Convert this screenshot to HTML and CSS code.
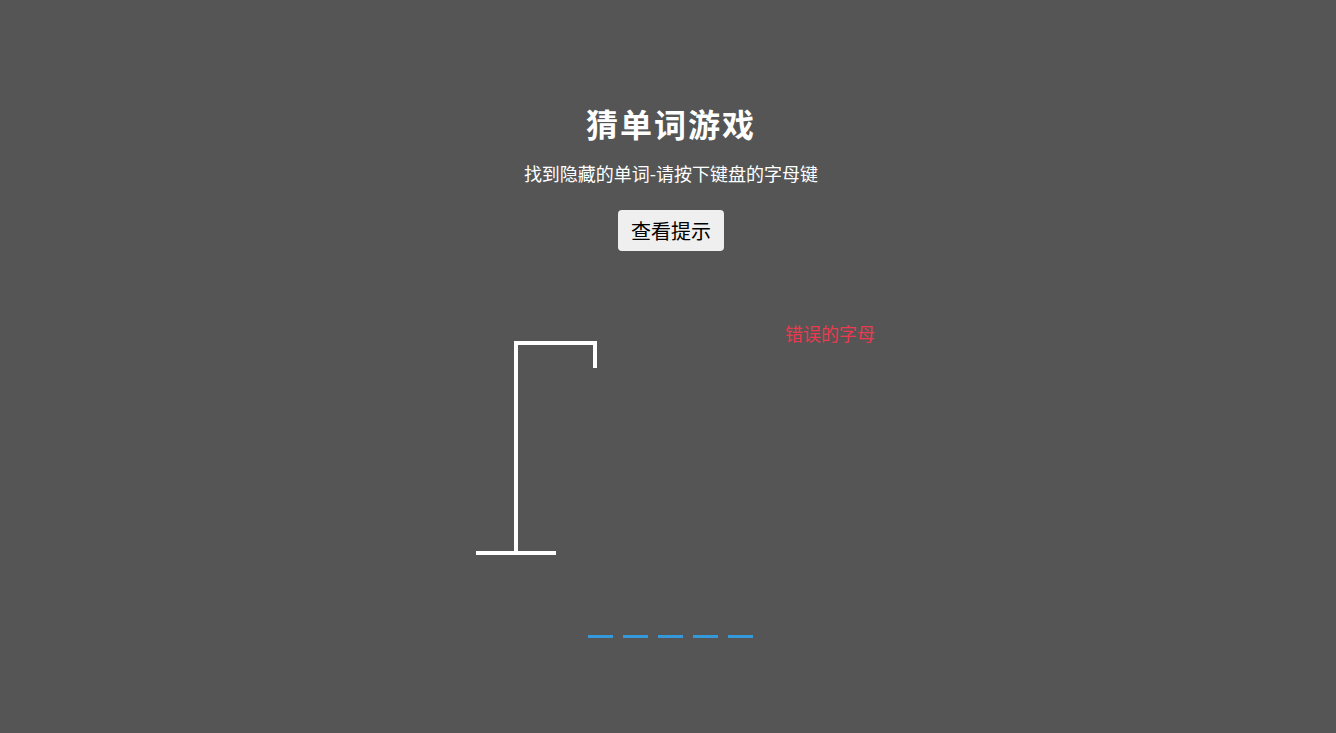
FILE: index.html
```html
<!DOCTYPE html>
<html lang="zh-CN">
<head>
<meta charset="UTF-8">
<title>猜单词游戏</title>
<link rel="stylesheet" href="styles.css">
</head>
<body>
  <h1 class="title">猜单词游戏</h1>
  <p class="subtitle">找到隐藏的单词-请按下键盘的字母键</p>
  <button class="hint-btn">查看提示</button>

  <div class="game-container">
    <svg class="figure" width="200" height="250" viewBox="0 0 200 250">
      <path d="M20 230 H100" />
      <path d="M60 230 V20 H139 V45" />
    </svg>
    <div class="wrong-letters">
      <p class="wrong-title">错误的字母</p>
    </div>
  </div>

  <div class="word">
    <span class="letter"></span>
    <span class="letter"></span>
    <span class="letter"></span>
    <span class="letter"></span>
    <span class="letter"></span>
  </div>
</body>
</html>
```

FILE: styles.css
```css
html, body {
  margin: 0;
  height: 100%;
}

body {
  background-color: #555555;
  color: #ffffff;
  font-family: "Noto Sans CJK SC", "Noto Sans", sans-serif;
  display: flex;
  flex-direction: column;
  align-items: center;
  padding-left: 6px;
  box-sizing: border-box;
  overflow: hidden;
}

.title {
  margin: 100px 0 0;
  font-size: 32px;
  line-height: 46px;
  font-weight: 700;
  letter-spacing: 2px;
}

.subtitle {
  margin: 15px 0 0;
  font-size: 18px;
  line-height: 24px;
  letter-spacing: 0;
}

.hint-btn {
  margin-top: 25px;
  font-family: "Noto Sans CJK SC", "Noto Sans", sans-serif;
  font-size: 20px;
  line-height: 29px;
  padding: 6px 13px;
  border: none;
  border-radius: 4px;
  background-color: #efefef;
  color: #000000;
  cursor: pointer;
}

.game-container {
  margin-top: 72px;
  width: 430px;
  display: flex;
  justify-content: space-between;
  align-items: flex-start;
}

.figure {
  display: block;
  fill: none;
  stroke: #ffffff;
  stroke-width: 4;
  stroke-linejoin: miter;
  stroke-linecap: butt;
}

.wrong-letters {
  padding-right: 11px;
  text-align: right;
}

.wrong-title {
  margin: 0;
  font-size: 18px;
  line-height: 21px;
  color: #ea3a4e;
}

.word {
  display: flex;
  margin-top: 15px;
  margin-left: -2px;
}

.letter {
  width: 25px;
  height: 47px;
  margin: 0 5px;
  border-bottom: 3px solid #3498db;
}
```
